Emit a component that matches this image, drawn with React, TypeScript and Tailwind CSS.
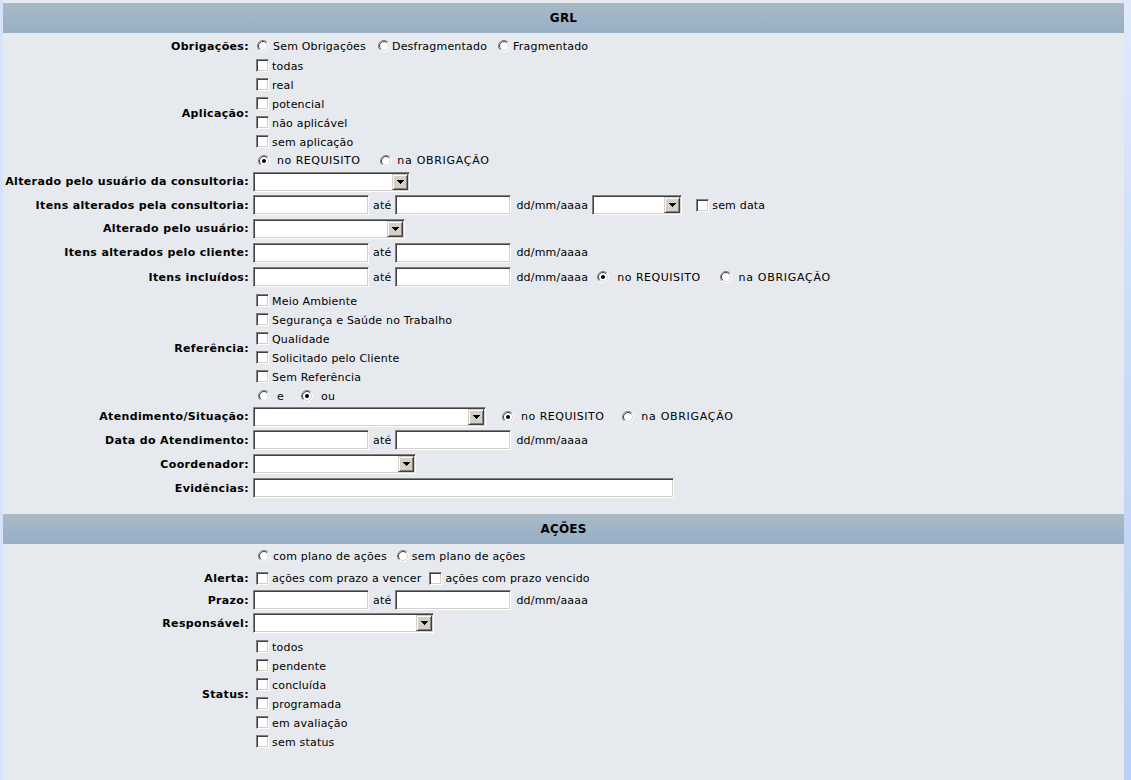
import React from 'react';

const inset =
  'border border-t-[#808080] border-l-[#808080] border-b-white border-r-white shadow-[inset_1px_1px_0_#404040,inset_-1px_-1px_0_#d4d0c8]';

function Radio({ checked = false }: { checked?: boolean }) {
  return (
    <svg width="12" height="12" viewBox="0 0 12 12" className="shrink-0">
      <circle cx="6" cy="6" r="5.5" fill="#fff" />
      <path d="M2.1 9.9A5.5 5.5 0 0 1 9.9 2.1" stroke="#808080" fill="none" />
      <path d="M9.9 2.1A5.5 5.5 0 0 1 2.1 9.9" stroke="#ffffff" fill="none" />
      <path d="M2.8 9.2A4.5 4.5 0 0 1 9.2 2.8" stroke="#404040" fill="none" />
      <path d="M9.2 2.8A4.5 4.5 0 0 1 2.8 9.2" stroke="#d4d0c8" fill="none" />
      {checked && <circle cx="6" cy="6" r="2" fill="#000" />}
    </svg>
  );
}

function Check() {
  return <span className={`block w-[13px] h-[13px] shrink-0 bg-white ${inset}`} />;
}

function TextBox({ w }: { w: string }) {
  return <input type="text" readOnly className={`h-[20px] ${w} bg-white outline-none ${inset}`} />;
}

function Select({ w }: { w: string }) {
  return (
    <div className={`h-[20px] ${w} flex justify-end p-[1px] bg-white ${inset}`}>
      <span className="w-[16px] h-[16px] flex items-center justify-center bg-[#d4d0c8] border border-t-[#d4d0c8] border-l-[#d4d0c8] border-b-[#404040] border-r-[#404040] shadow-[inset_1px_1px_0_#fff,inset_-1px_-1px_0_#808080]">
        <svg width="7" height="4" viewBox="0 0 7 4">
          <path d="M0 0h7v1H0zM1 1h5v1H1zM2 2h3v1H2zM3 3h1v1H3z" fill="#000" />
        </svg>
      </span>
    </div>
  );
}

// text sits a touch lower than the controls, like the old IE rendering
function T({ className = '', children }: { className?: string; children: React.ReactNode }) {
  return <span className={`pt-[2px] ${className}`}>{children}</span>;
}

function Label({ children }: { children: React.ReactNode }) {
  return (
    <div className="w-[246px] shrink-0 pt-[2px] text-right font-bold tracking-[0.35px] whitespace-nowrap">
      {children}
    </div>
  );
}

function Row({ label, h, children }: { label?: string; h: string; children: React.ReactNode }) {
  return (
    <div className={`flex items-center ${h}`}>
      <Label>{label}</Label>
      <div className="ml-[4px] flex items-center whitespace-nowrap">{children}</div>
    </div>
  );
}

function Group({ label, pt, children }: { label: string; pt?: string; children: React.ReactNode }) {
  return (
    <div className={`flex items-center ${pt ?? ''}`}>
      <Label>{label}</Label>
      <div className="ml-[4px] flex flex-col">{children}</div>
    </div>
  );
}

function CheckLine({ text }: { text: string }) {
  return (
    <div className="h-[19px] flex items-center">
      <span className="ml-[3px]">
        <Check />
      </span>
      <span className="ml-[3px] pt-[3px]">{text}</span>
    </div>
  );
}

function DateRange({ children }: { children?: React.ReactNode }) {
  return (
    <>
      <TextBox w="w-[116px]" />
      <T className="ml-[4px]">até</T>
      <span className="ml-[4px] flex">
        <TextBox w="w-[116px]" />
      </span>
      <T className="ml-[5px]">dd/mm/aaaa</T>
      {children}
    </>
  );
}

function Header({ title }: { title: string }) {
  return (
    <div className="h-[30px] flex items-center justify-center bg-gradient-to-b from-[#a9bac5] via-[#9fb4c6] to-[#98aec5] font-bold text-[12px]">
      {title}
    </div>
  );
}

export default function App() {
  return (
    <div className="flex min-h-screen h-[780px] font-['DejaVu_Sans',sans-serif] text-[11px] tracking-[0.2px] text-black">
      <div className="w-[3px] shrink-0 bg-[#d5e2f9]" />
      <div className="w-[1121px] shrink-0 bg-[#e6e9ee] pt-[3px]">
        <Header title="GRL" />
        <div className="pt-[3px]">
          <Row label="Obrigações:" h="h-[20px]">
            <span className="ml-[4px]"><Radio /></span>
            <T className="ml-[4px]">Sem Obrigações</T>
            <span className="ml-[12px]"><Radio /></span>
            <T className="ml-[2px]">Desfragmentado</T>
            <span className="ml-[11px]"><Radio /></span>
            <T className="ml-[3px]">Fragmentado</T>
          </Row>
          <Group label="Aplicação:">
            <CheckLine text="todas" />
            <CheckLine text="real" />
            <CheckLine text="potencial" />
            <CheckLine text="não aplicável" />
            <CheckLine text="sem aplicação" />
            <div className="h-[19px] flex items-center">
              <span className="ml-[5px]"><Radio checked /></span>
              <T className="ml-[7px] tracking-[0.5px]">no REQUISITO</T>
              <span className="ml-[20px]"><Radio /></span>
              <T className="ml-[5px] tracking-[0.7px]">na OBRIGAÇÃO</T>
            </div>
          </Group>
          <Row label="Alterado pelo usuário da consultoria:" h="h-[23px]">
            <Select w="w-[157px]" />
          </Row>
          <Row label="Itens alterados pela consultoria:" h="h-[24px]">
            <DateRange>
              <span className="ml-[4px] flex">
                <Select w="w-[90px]" />
              </span>
              <span className="ml-[14px]"><Check /></span>
              <T className="ml-[3px]">sem data</T>
            </DateRange>
          </Row>
          <Row label="Alterado pelo usuário:" h="h-[23px]">
            <Select w="w-[152px]" />
          </Row>
          <Row label="Itens alterados pelo cliente:" h="h-[25px]">
            <DateRange />
          </Row>
          <Row label="Itens incluídos:" h="h-[24px]">
            <DateRange>
              <span className="ml-[9px]"><Radio checked /></span>
              <T className="ml-[8px] tracking-[0.5px]">no REQUISITO</T>
              <span className="ml-[19px]"><Radio /></span>
              <T className="ml-[7px] tracking-[0.7px]">na OBRIGAÇÃO</T>
            </DateRange>
          </Row>
          <Group label="Referência:" pt="pt-[2px]">
            <CheckLine text="Meio Ambiente" />
            <CheckLine text="Segurança e Saúde no Trabalho" />
            <CheckLine text="Qualidade" />
            <CheckLine text="Solicitado pelo Cliente" />
            <CheckLine text="Sem Referência" />
            <div className="h-[19px] flex items-center">
              <span className="ml-[5px]"><Radio /></span>
              <span className="ml-[7px] pt-[4px]">e</span>
              <span className="ml-[17px]"><Radio checked /></span>
              <span className="ml-[8px] pt-[4px]">ou</span>
            </div>
          </Group>
          <Row label="Atendimento/Situação:" h="h-[23px]">
            <Select w="w-[233px]" />
            <span className="ml-[16px]"><Radio checked /></span>
            <T className="ml-[7px] tracking-[0.5px]">no REQUISITO</T>
            <span className="ml-[18px]"><Radio /></span>
            <T className="ml-[7px] tracking-[0.7px]">na OBRIGAÇÃO</T>
          </Row>
          <Row label="Data do Atendimento:" h="h-[24px]">
            <DateRange />
          </Row>
          <Row label="Coordenador:" h="h-[24px]">
            <Select w="w-[163px]" />
          </Row>
          <Row label="Evidências:" h="h-[24px]">
            <TextBox w="w-[421px]" />
          </Row>
        </div>
        <div className="h-[14px]" />
        <Header title="AÇÕES" />
        <div className="pt-[1px]">
          <Row h="h-[22px]">
            <span className="ml-[5px]"><Radio /></span>
            <T className="ml-[3px]">com plano de ações</T>
            <span className="ml-[10px]"><Radio /></span>
            <T className="ml-[3px]">sem plano de ações</T>
          </Row>
          <Row label="Alerta:" h="h-[22px]">
            <span className="ml-[3px]"><Check /></span>
            <T className="ml-[3px]">ações com prazo a vencer</T>
            <span className="ml-[8px]"><Check /></span>
            <T className="ml-[3px]">ações com prazo vencido</T>
          </Row>
          <Row label="Prazo:" h="h-[22px]">
            <DateRange />
          </Row>
          <Row label="Responsável:" h="h-[24px]">
            <Select w="w-[181px]" />
          </Row>
          <Group label="Status:" pt="pt-[2px]">
            <CheckLine text="todos" />
            <CheckLine text="pendente" />
            <CheckLine text="concluída" />
            <CheckLine text="programada" />
            <CheckLine text="em avaliação" />
            <CheckLine text="sem status" />
          </Group>
        </div>
      </div>
      <div className="flex-1 bg-gradient-to-b from-[#e0eafc] via-[#c9daf8] to-[#b9cff5]" />
    </div>
  );
}
